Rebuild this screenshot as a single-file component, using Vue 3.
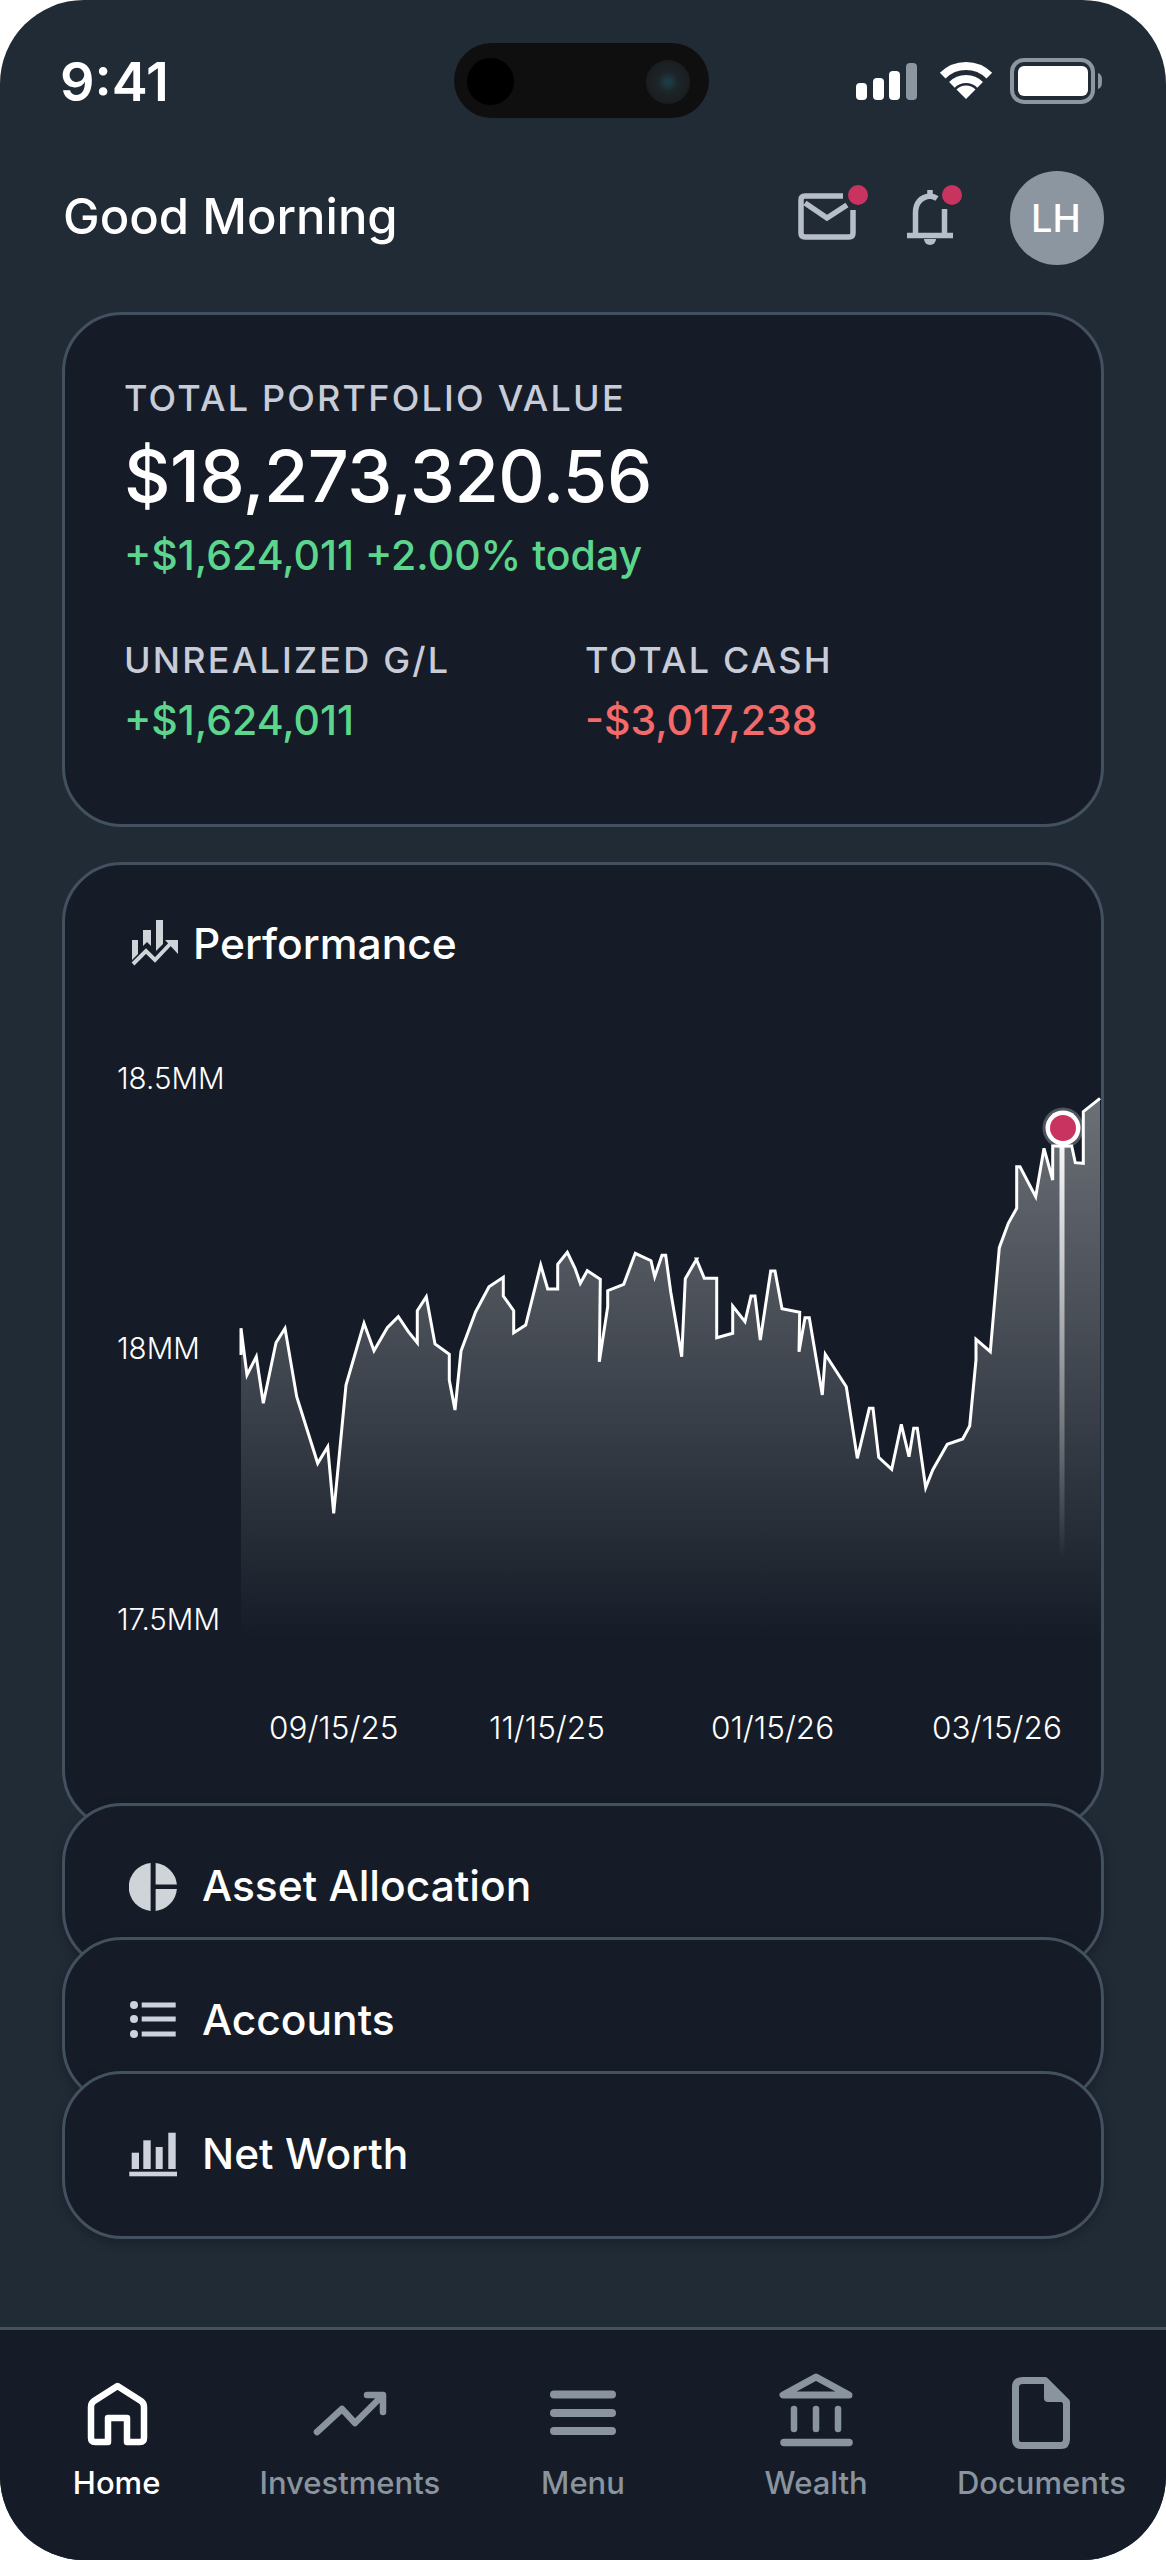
<script setup>
// chart points read off the screenshot, in page px minus the crop origin, x3
const left = [[63,885],[63,805],[81,945],[109,890],[130,1030],[168,848],[195,805],[230,1010],[293,1210],[323,1160],[341,1360],[378,975],[432,790],[462,872],[502,803],[535,770],[565,815],[592,848],[592,752],[619,710],[645,852],[688,883],[688,960],[705,1050],[723,873],[767,755],[807,680],[850,652],[850,708],[881,752],[881,818],[917,795],[962,615],[983,687],[1013,687],[1013,613],[1042,577],[1065,625],[1081,670],[1102,632],[1141,658],[1138,905],[1163,740],[1163,692],[1211,673],[1246,580],[1293,602],[1304,650],[1326,586],[1337,586],[1352,695],[1385,890],[1396,656],[1430,597]]
const right = [[49,597],[73,655],[110,655],[110,833],[158,820],[158,738],[195,785],[213,708],[225,708],[241,840],[272,633],[285,633],[306,746],[359,757],[357,875],[375,773],[388,773],[427,1005],[436,883],[499,980],[532,1195],[568,1045],[579,1045],[596,1192],[635,1228],[664,1093],[687,1190],[701,1105],[712,1105],[737,1283],[758,1230],[802,1153],[848,1137],[869,1098],[888,900],[888,838],[931,875],[958,563],[985,490],[1010,445],[1010,320],[1020,320],[1067,410],[1092,265],[1118,360],[1118,258],[1175,258],[1186,308],[1210,310],[1210,155],[1260,115]]

const toPage = (ox) => ([x, y]) => `${(ox + x / 3).toFixed(1)},${(1060 + y / 3).toFixed(1)}`
const line = [...left.map(toPage(220)), ...right.map(toPage(680))].join(' ')
const area = `241,1700 ${line} 1101,1700`

const yLabels = [
  { text: '18.5MM', x: 117, y: 1089 },
  { text: '18MM', x: 117, y: 1359 },
  { text: '17.5MM', x: 117, y: 1630 },
]
const xLabels = [
  { text: '09/15/25', x: 269 },
  { text: '11/15/25', x: 489 },
  { text: '01/15/26', x: 711 },
  { text: '03/15/26', x: 932 },
]
</script>

<template>
  <div class="phone">
    <div class="status">
      <span class="time">9:41</span>
      <div class="island">
        <span class="lens-left"></span>
        <span class="lens-right"></span>
      </div>
      <div class="status-icons">
        <svg width="62" height="42" viewBox="0 0 62 42">
          <rect x="0" y="23" width="11" height="17" rx="4" fill="#fff" />
          <rect x="17" y="18" width="11" height="22" rx="4" fill="#fff" />
          <rect x="33" y="11" width="11" height="29" rx="4" fill="#fff" />
          <rect x="50" y="3" width="11" height="37" rx="4" fill="#8c96a0" />
        </svg>
        <svg class="wifi" width="54" height="44" viewBox="0 0 54 44">
          <path d="M3.7 16.7A33 33 0 0 1 50.3 16.7M12.9 25.9A20 20 0 0 1 41.1 25.9" fill="none" stroke="#fff" stroke-width="8" />
          <path d="M27 40L17.5 30.5A13.4 13.4 0 0 1 36.5 30.5Z" fill="#fff" />
        </svg>
        <svg width="93" height="46" viewBox="0 0 93 46">
          <rect x="2" y="2" width="81" height="42" rx="12" fill="none" stroke="#8c96a0" stroke-width="4" />
          <rect x="8" y="8" width="70" height="30" rx="6" fill="#fff" />
          <path d="M88 15C91 16 92 18 92 23C92 28 91 30 88 31Z" fill="#8c96a0" />
        </svg>
      </div>
    </div>

    <header class="top">
      <h1>Good Morning</h1>
      <div class="top-actions">
        <svg width="80" height="70" viewBox="0 0 80 70">
          <path d="M53 13H15Q11 13 11 17V50Q11 54 15 54H59Q63 54 63 50V27M15 20L37 35L57 22" fill="none" stroke="#b6bfc9" stroke-width="5.5" />
          <circle cx="68" cy="12" r="10" fill="#c9335f" />
        </svg>
        <svg width="80" height="70" viewBox="0 0 80 70">
          <path d="M15.5 52V30Q15.5 15 30 13Q34 13.5 37 15.5M44.5 26V52" fill="none" stroke="#b6bfc9" stroke-width="5.5" />
          <path d="M7 52.5H53M30 7V13" fill="none" stroke="#b6bfc9" stroke-width="5.5" />
          <path d="M24 56H36A6 6 0 0 1 24 56Z" fill="#b6bfc9" />
          <circle cx="52" cy="12" r="10" fill="#c9335f" />
        </svg>
        <div class="avatar">LH</div>
      </div>
    </header>

    <main class="content">
      <section class="card summary">
        <div class="label">TOTAL PORTFOLIO VALUE</div>
        <div class="total">$18,273,320.56</div>
        <div class="amount up">+$1,624,011 +2.00% today</div>
        <div class="stats">
          <div>
            <div class="label">UNREALIZED G/L</div>
            <div class="amount up stat-value">+$1,624,011</div>
          </div>
          <div>
            <div class="label">TOTAL CASH</div>
            <div class="amount down stat-value">-$3,017,238</div>
          </div>
        </div>
      </section>

      <section class="card performance">
        <div class="perf-title">
          <svg width="50" height="50" viewBox="0 0 50 50" fill="#cfd4d9">
            <path d="M2 22H8V36L2 42ZM13 12H21V28L17 24L13 28ZM26 2H33V26L26 33Z" />
            <path d="M3 46L16 33L25 42L42 24" fill="none" stroke="#cfd4d9" stroke-width="4" />
            <path d="M35 22H48V36Z" />
          </svg>
          <span>Performance</span>
        </div>
        <svg class="chart" width="1036" height="800" viewBox="65 1000 1036 800">
          <defs>
            <linearGradient id="areaFill" gradientUnits="userSpaceOnUse" x1="0" y1="1100" x2="0" y2="1640">
              <stop offset="0" stop-color="#fff" stop-opacity="0.37" />
              <stop offset="1" stop-color="#fff" stop-opacity="0" />
            </linearGradient>
            <linearGradient id="markerLine" gradientUnits="userSpaceOnUse" x1="0" y1="1140" x2="0" y2="1560">
              <stop offset="0" stop-color="#fff" stop-opacity="0.95" />
              <stop offset="1" stop-color="#fff" stop-opacity="0" />
            </linearGradient>
          </defs>
          <polygon :points="area" fill="url(#areaFill)" />
          <polyline :points="line" fill="none" stroke="#fff" stroke-width="3" />
          <rect x="1059.5" y="1140" width="5" height="420" fill="url(#markerLine)" />
          <circle cx="1063" cy="1128" r="20.5" fill="#fff" opacity="0.25" />
          <circle cx="1063" cy="1128" r="17.5" fill="#fff" />
          <circle cx="1063" cy="1128" r="13" fill="#c9335f" />
          <text v-for="l in yLabels" :key="l.text" class="axis" :x="l.x" :y="l.y">{{ l.text }}</text>
          <text v-for="l in xLabels" :key="l.text" class="axis date" :x="l.x" y="1739">{{ l.text }}</text>
        </svg>
      </section>

      <div class="row first">
        <svg width="48" height="48" viewBox="0 0 48 48" fill="#cfd4d9">
          <path d="M21.6 0.1A24 24 0 0 0 21.6 47.9Z" />
          <path d="M26.6 0.1A24 24 0 0 1 47.9 21.5H26.6Z" />
          <path d="M26.6 26H47.9A24 24 0 0 1 26.6 47.9Z" />
        </svg>
        <span>Asset Allocation</span>
      </div>
      <div class="row">
        <svg width="48" height="48" viewBox="0 0 48 48" fill="#cdd2dc">
          <circle cx="5" cy="8" r="4" />
          <circle cx="5" cy="22" r="4" />
          <circle cx="5" cy="37" r="4" />
          <rect x="12.7" y="5.5" width="34" height="5" />
          <rect x="12.7" y="19.5" width="34" height="5" />
          <rect x="12.7" y="34.5" width="34" height="5" />
        </svg>
        <span>Accounts</span>
      </div>
      <div class="row">
        <svg width="48" height="48" viewBox="0 0 48 48" fill="#cdd2dc">
          <rect x="2.7" y="21.7" width="7.3" height="16.3" />
          <rect x="14.3" y="9.3" width="7.4" height="28.7" />
          <rect x="26.7" y="16" width="7" height="22" />
          <rect x="39.3" y="1.7" width="7.4" height="36.3" />
          <rect x="0.3" y="40.7" width="48" height="4.6" />
        </svg>
        <span>Net Worth</span>
      </div>
    </main>

    <nav class="tabbar">
      <div class="tab active">
        <svg width="80" height="80" viewBox="0 0 80 80">
          <path d="M14 38Q14 34 17 32L40.5 17L64 32Q67 34 67 38V69Q67 73 63 73H50V49H31V73H18Q14 73 14 69Z" fill="none" stroke="#fff" stroke-width="6.5" stroke-linejoin="round" />
        </svg>
        <span>Home</span>
      </div>
      <div class="tab">
        <svg width="80" height="80" viewBox="0 0 80 80">
          <path d="M7 63L32 40L45 54L72 27M57 26H73V43" fill="none" stroke="#8a949e" stroke-width="6.5" stroke-linecap="round" stroke-linejoin="round" />
        </svg>
        <span>Investments</span>
      </div>
      <div class="tab">
        <svg width="80" height="80" viewBox="0 0 80 80">
          <path d="M11 25.5H69M11 44H69M11 62H69" fill="none" stroke="#8a949e" stroke-width="8" stroke-linecap="round" />
        </svg>
        <span>Menu</span>
      </div>
      <div class="tab">
        <svg width="80" height="80" viewBox="0 0 80 80">
          <path d="M40 8L7 26H73Z" fill="none" stroke="#8a949e" stroke-width="7" stroke-linejoin="round" />
          <path d="M18 40V60M40 40V60M62 40V60" fill="none" stroke="#8a949e" stroke-width="6.5" stroke-linecap="round" />
          <path d="M8 73.5H73" fill="none" stroke="#8a949e" stroke-width="7.5" stroke-linecap="round" />
        </svg>
        <span>Wealth</span>
      </div>
      <div class="tab docs">
        <svg width="80" height="80" viewBox="0 0 80 80">
          <path d="M22 11.5H44L65.5 33V70Q65.5 76.5 60 76.5H20Q14.5 76.5 14.5 70V18Q14.5 11.5 22 11.5Z" fill="none" stroke="#8a949e" stroke-width="7" stroke-linejoin="round" />
          <path d="M43 11L66 33H47Q43 33 43 29Z" fill="#8a949e" />
        </svg>
        <span>Documents</span>
      </div>
    </nav>
  </div>
</template>

<style>
body {
  background: #fff;
}
</style>

<style scoped>
.phone {
  position: relative;
  width: 1166px;
  height: 2560px;
  display: flex;
  flex-direction: column;
  overflow: hidden;
  background: #212b36;
  border-radius: 84px;
  color: #fff;
  font-family: Inter, "Noto Sans", sans-serif;
}

.status {
  display: flex;
  justify-content: space-between;
  align-items: center;
  height: 75px;
  margin-top: 43px;
  padding: 0 63px 0 60px;
}

.time {
  font-size: 54px;
  font-weight: 600;
  position: relative;
  top: 1px;
}

.island {
  position: absolute;
  left: 454px;
  top: 43px;
  width: 255px;
  height: 75px;
  background: #0f0f0f;
  border-radius: 38px;
}

.lens-left {
  position: absolute;
  left: 13px;
  top: 15px;
  width: 47px;
  height: 47px;
  border-radius: 50%;
  background: #000;
}

.lens-right {
  position: absolute;
  left: 192px;
  top: 17px;
  width: 44px;
  height: 44px;
  border-radius: 50%;
  background: radial-gradient(circle at 50% 50%, #1c3a42 0 10%, #1c2529 32%, #1a1d20 70%, #141515 100%);
}

.status-icons {
  display: flex;
  align-items: center;
  gap: 21px;
}

.status-icons svg {
  display: block;
}

.wifi {
  margin-right: -4px;
}

.top {
  display: flex;
  justify-content: space-between;
  align-items: center;
  height: 94px;
  margin-top: 53px;
  padding: 0 62px 0 63px;
}

.top h1 {
  margin: 0;
  padding-bottom: 3px;
  font-size: 49px;
  font-weight: 500;
}

.top-actions {
  display: flex;
  align-items: center;
  gap: 30px;
}

.avatar {
  width: 94px;
  height: 94px;
  box-sizing: border-box;
  padding-right: 2px;
  display: flex;
  align-items: center;
  justify-content: center;
  border-radius: 50%;
  background: #8c96a0;
  font-size: 38px;
  font-weight: 500;
}

.content {
  display: flex;
  flex-direction: column;
  margin-top: 47px;
  padding: 0 62px;
}

.card,
.row {
  position: relative;
  background: #151c27;
  border: 3px solid #43505f;
  border-radius: 60px;
}

.summary {
  height: 515px;
  box-sizing: border-box;
  padding: 61px 59px 0;
}

.label {
  font-size: 36px;
  line-height: 44px;
  font-weight: 500;
  letter-spacing: 2.2px;
  color: #c8ccd8;
}

.total {
  margin-top: 16px;
  font-size: 72px;
  line-height: 80px;
  font-weight: 500;
  letter-spacing: -0.5px;
}

.amount {
  margin-top: 14px;
  font-size: 41px;
  line-height: 50px;
  font-weight: 500;
}

.up {
  color: #5cd68d;
}

.down {
  color: #f4696a;
}

.stats {
  display: grid;
  grid-template-columns: 461px auto;
  margin-top: 58px;
}

.stat-value {
  margin-top: 13px;
}

.performance {
  margin-top: 35px;
  overflow: hidden;
  padding-bottom: 27px;
}

.perf-title {
  display: flex;
  align-items: center;
  gap: 13px;
  height: 56px;
  margin: 50px 0 29px 65px;
  font-size: 42.5px;
  font-weight: 500;
}

.chart {
  display: block;
}

.axis {
  font-size: 29.5px;
  font-weight: 300;
  fill: #fff;
}

.axis.date {
  font-size: 31.5px;
}

.row {
  display: flex;
  align-items: center;
  gap: 25px;
  height: 168px;
  box-sizing: border-box;
  margin-top: -34px;
  padding-left: 64px;
  font-size: 42.5px;
  font-weight: 500;
  box-shadow: 0 4px 12px rgba(0, 0, 0, 0.25);
}

.row span {
  margin-bottom: 3px;
}

.row.first {
  margin-top: -27px;
}

.tabbar {
  display: grid;
  grid-template-columns: repeat(5, 1fr);
  margin-top: auto;
  height: 233px;
  box-sizing: border-box;
  padding-top: 39px;
  background: #151c27;
  border-top: 3px solid #43505f;
}

.tab {
  display: flex;
  flex-direction: column;
  align-items: center;
  gap: 14px;
  font-size: 31px;
  line-height: 40px;
  font-weight: 500;
  color: #8a949e;
}

.tab svg {
  display: block;
}

.tab.active {
  color: #fff;
}

.tab.docs {
  margin-right: 16px;
}
</style>
